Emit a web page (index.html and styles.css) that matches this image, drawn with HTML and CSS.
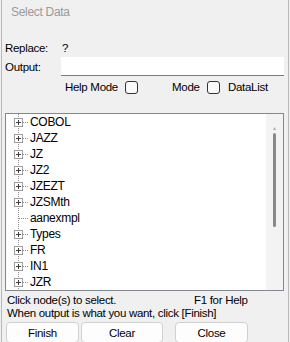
FILE: index.html
```html
<!DOCTYPE html>
<html lang="en">
<head>
  <meta charset="UTF-8">
  <title>Select Data</title>
  <link rel="stylesheet" href="styles.css">
</head>
<body>
  <div class="window">
    <div class="title">Select Data</div>

    <div class="field-row replace-row">
      <span class="label">Replace:</span>
      <span class="value">?</span>
    </div>
    <div class="field-row output-row">
      <span class="label">Output:</span>
      <div class="output-box"></div>
    </div>
    <div class="options-row">
      <span class="opt help">Help Mode</span>
      <span class="check"></span>
      <span class="opt mode">Mode</span>
      <span class="check"></span>
      <span class="opt datalist">DataList</span>
    </div>

    <div class="tree">
      <ul class="nodes">
        <li class="node"><span class="expander"></span><span class="dots"></span>COBOL</li>
        <li class="node"><span class="expander"></span><span class="dots"></span>JAZZ</li>
        <li class="node"><span class="expander"></span><span class="dots"></span>JZ</li>
        <li class="node"><span class="expander"></span><span class="dots"></span>JZ2</li>
        <li class="node"><span class="expander"></span><span class="dots"></span>JZEZT</li>
        <li class="node"><span class="expander"></span><span class="dots"></span>JZSMth</li>
        <li class="node leaf"><span class="dots long"></span>aanexmpl</li>
        <li class="node"><span class="expander"></span><span class="dots"></span>Types</li>
        <li class="node"><span class="expander"></span><span class="dots"></span>FR</li>
        <li class="node"><span class="expander"></span><span class="dots"></span>IN1</li>
        <li class="node"><span class="expander"></span><span class="dots"></span>JZR</li>
      </ul>
      <div class="scrollbar">
        <span class="arrow">&#9652;</span>
        <span class="thumb"></span>
      </div>
    </div>

    <div class="status">
      <div class="status-line">
        <span class="hint">Click node(s) to select.</span>
        <span class="f1">F1 for Help</span>
      </div>
      <div class="status-line">When output is what you want, click [Finish]</div>
    </div>

    <div class="buttons">
      <button class="btn finish">Finish</button>
      <button class="btn clear">Clear</button>
      <button class="btn close">Close</button>
    </div>
  </div>
</body>
</html>
```

FILE: styles.css
```css
body {
  margin: 0;
  background: #f0f0f0;
  font-family: "Liberation Sans", Arial, sans-serif;
  font-size: 11.5px;
  letter-spacing: -0.3px;
  color: #000;
}

.window {
  margin: 0 1px;
  height: 342px;
  box-sizing: border-box;
  border-left: 1px solid #b8b8b8;
  border-right: 1px solid #b8b8b8;
  padding: 0 4px 0 3px;
  overflow: hidden;
}

.title {
  height: 24px;
  line-height: 24px;
  padding-left: 6px;
  color: #9a9a9a;
  font-size: 12px;
  margin-bottom: 16px;
}

/* label rows */
.field-row {
  display: flex;
  align-items: center;
}

.label {
  width: 56px;
  flex: none;
}

.replace-row {
  height: 16px;
}

.replace-row .value {
  padding-left: 1px;
}

.output-row {
  height: 19px;
  margin-top: 1px;
}

.output-box {
  flex: 1;
  height: 18px;
  background: #fff;
  border-bottom: 1px solid #7a7a7a;
}

.options-row {
  display: flex;
  align-items: center;
  height: 14px;
  margin-top: 4px;
  padding-left: 60px;
}

.check {
  width: 11px;
  height: 11px;
  border: 1px solid #333;
  border-radius: 3px;
  background: #fafafa;
  flex: none;
}

.help { width: 60px; }
.mode { margin-left: 34px; width: 35px; }
.datalist { margin-left: 8px; }

/* tree view */
.tree {
  display: flex;
  margin-top: 19px;
  height: 178px;
  box-sizing: border-box;
  border: 1px solid #828790;
  background: #fff;
}

.nodes {
  flex: 1;
  list-style: none;
  margin: 0;
  padding: 0;
  background-image: linear-gradient(to bottom, #8c8c8c 50%, transparent 50%);
  background-size: 1px 2px;
  background-repeat: repeat-y;
  background-position: 12px 0;
}

.node {
  display: flex;
  align-items: center;
  height: 16px;
  padding-left: 8px;
  white-space: nowrap;
  font-size: 12px;
}

.expander {
  width: 7px;
  height: 7px;
  border: 1px solid #9c9c9c;
  background:
    linear-gradient(#404040, #404040) center / 5px 1px no-repeat,
    linear-gradient(#404040, #404040) center / 1px 5px no-repeat,
    #fff;
  flex: none;
}

.dots {
  width: 6px;
  height: 1px;
  margin-right: 1px;
  background-image: linear-gradient(to right, #8c8c8c 50%, transparent 50%);
  background-size: 2px 1px;
}

.leaf .dots.long {
  width: 10px;
  margin-left: 5px;
}

.scrollbar {
  width: 17px;
  background: #f3f3f3;
  display: flex;
  flex-direction: column;
  align-items: center;
}

.arrow {
  font-size: 6px;
  line-height: 8px;
  color: #b0b0b0;
  margin-top: 10px;
}

.thumb {
  width: 3px;
  height: 94px;
  margin-top: 1px;
  background: #8a8a8a;
  border-radius: 2px;
}

/* status text */
.status {
  margin-top: 3px;
  padding-left: 2px;
}

.status-line {
  display: flex;
  height: 13px;
  line-height: 13px;
}

.hint {
  width: 187px;
}

/* buttons */
.buttons {
  display: flex;
  margin-top: 2px;
}

.btn {
  height: 21px;
  font-family: inherit;
  font-size: 11.5px;
  letter-spacing: -0.3px;
  color: #000;
  background: #fdfdfd;
  border: 1px solid #d0d0d0;
  border-radius: 4px;
  padding: 0;
}

.finish { width: 73px; margin-left: 1px; }
.clear { width: 82px; margin-left: 2px; }
.close { width: 73px; margin-left: 12px; }
```
